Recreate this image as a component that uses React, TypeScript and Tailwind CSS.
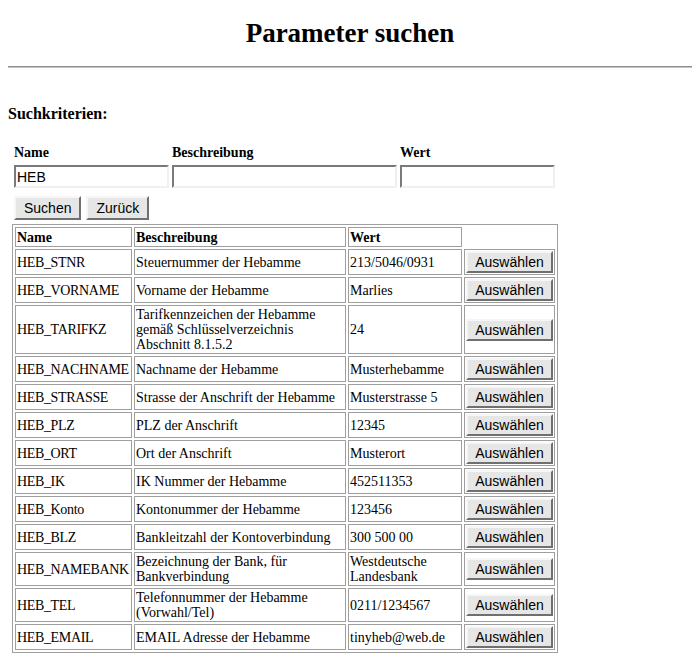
const rows = [
  { name: 'HEB_STNR', desc: 'Steuernummer der Hebamme', value: '213/5046/0931' },
  { name: 'HEB_VORNAME', desc: 'Vorname der Hebamme', value: 'Marlies' },
  { name: 'HEB_TARIFKZ', desc: 'Tarifkennzeichen der Hebamme gemäß Schlüsselverzeichnis Abschnitt 8.1.5.2', value: '24' },
  { name: 'HEB_NACHNAME', desc: 'Nachname der Hebamme', value: 'Musterhebamme' },
  { name: 'HEB_STRASSE', desc: 'Strasse der Anschrift der Hebamme', value: 'Musterstrasse 5' },
  { name: 'HEB_PLZ', desc: 'PLZ der Anschrift', value: '12345' },
  { name: 'HEB_ORT', desc: 'Ort der Anschrift', value: 'Musterort' },
  { name: 'HEB_IK', desc: 'IK Nummer der Hebamme', value: '452511353' },
  { name: 'HEB_Konto', desc: 'Kontonummer der Hebamme', value: '123456' },
  { name: 'HEB_BLZ', desc: 'Bankleitzahl der Kontoverbindung', value: '300 500 00' },
  { name: 'HEB_NAMEBANK', desc: 'Bezeichnung der Bank, für Bankverbindung', value: 'Westdeutsche Landesbank' },
  { name: 'HEB_TEL', desc: 'Telefonnummer der Hebamme (Vorwahl/Tel)', value: '0211/1234567' },
  { name: 'HEB_EMAIL', desc: 'EMAIL Adresse der Hebamme', value: 'tinyheb@web.de' },
];

const btn =
  "font-['Liberation_Sans',sans-serif] text-[14px] leading-[16px] text-black bg-[#e6e6e6] border-2 border-t-[#f6f6f6] border-l-[#f6f6f6] border-r-[#6f6f6f] border-b-[#6f6f6f]";

const input =
  "h-[23px] px-[1px] font-['Liberation_Sans',sans-serif] text-[14px] leading-[17px] text-black bg-white border-2 border-t-[#7a7a7a] border-l-[#7a7a7a] border-r-[#f0f0f0] border-b-[#f0f0f0] outline-none";

const cell = 'border border-[#9e9e9e] p-[1px] align-middle text-left leading-[15px]';

const App = () => {
  return (
    <div className="min-h-[662px] bg-white p-2 font-['Liberation_Serif',serif] text-black">
      <h1 className="mt-[10px] text-center text-[27px] font-bold leading-[30px]">Parameter suchen</h1>
      <hr className="mt-[18px] h-[2px] border-0 border-t border-b border-t-[#8e8e8e] border-b-[#c4c4c4]" />

      <div className="mt-[37px] text-[16px] font-bold leading-[18px]">Suchkriterien:</div>

      <div className="ml-[6px] mt-[22px] flex gap-[3px]">
        <div className="flex flex-col gap-[4px]">
          <label className="text-[14px] font-bold leading-[16px]">Name</label>
          <input className={`${input} w-[155px]`} defaultValue="HEB" />
        </div>
        <div className="flex flex-col gap-[4px]">
          <label className="text-[14px] font-bold leading-[16px]">Beschreibung</label>
          <input className={`${input} w-[225px]`} />
        </div>
        <div className="flex flex-col gap-[4px]">
          <label className="text-[14px] font-bold leading-[16px]">Wert</label>
          <input className={`${input} w-[155px]`} />
        </div>
      </div>

      <div className="ml-[6px] mt-[8px] flex gap-[5px]">
        <button className={`${btn} h-[24px] px-2`}>Suchen</button>
        <button className={`${btn} h-[24px] px-2`}>Zurück</button>
      </div>

      <table className="ml-[4px] mt-[4px] w-[546px] table-fixed border-separate border-spacing-[2px] border border-[#a0a0a0] text-[14px]">
        <colgroup>
          <col className="w-[117px]" />
          <col className="w-[212px]" />
          <col className="w-[114px]" />
          <col className="w-[91px]" />
        </colgroup>
        <thead>
          <tr>
            <th className={`${cell} h-[20px] font-bold`}>Name</th>
            <th className={`${cell} font-bold`}>Beschreibung</th>
            <th className={`${cell} font-bold`}>Wert</th>
            <th className="p-[1px]"></th>
          </tr>
        </thead>
        <tbody>
          {rows.map((r) => (
            <tr key={r.name}>
              <td className={`${cell} whitespace-nowrap tracking-[-0.35px]`}>{r.name}</td>
              <td className={cell}>{r.desc}</td>
              <td className={cell}>{r.value}</td>
              <td className={`${cell} h-[26px]`}>
                <button className={`${btn} h-[22px] w-full`}>Auswählen</button>
              </td>
            </tr>
          ))}
        </tbody>
      </table>
    </div>
  );
};

export default App;
